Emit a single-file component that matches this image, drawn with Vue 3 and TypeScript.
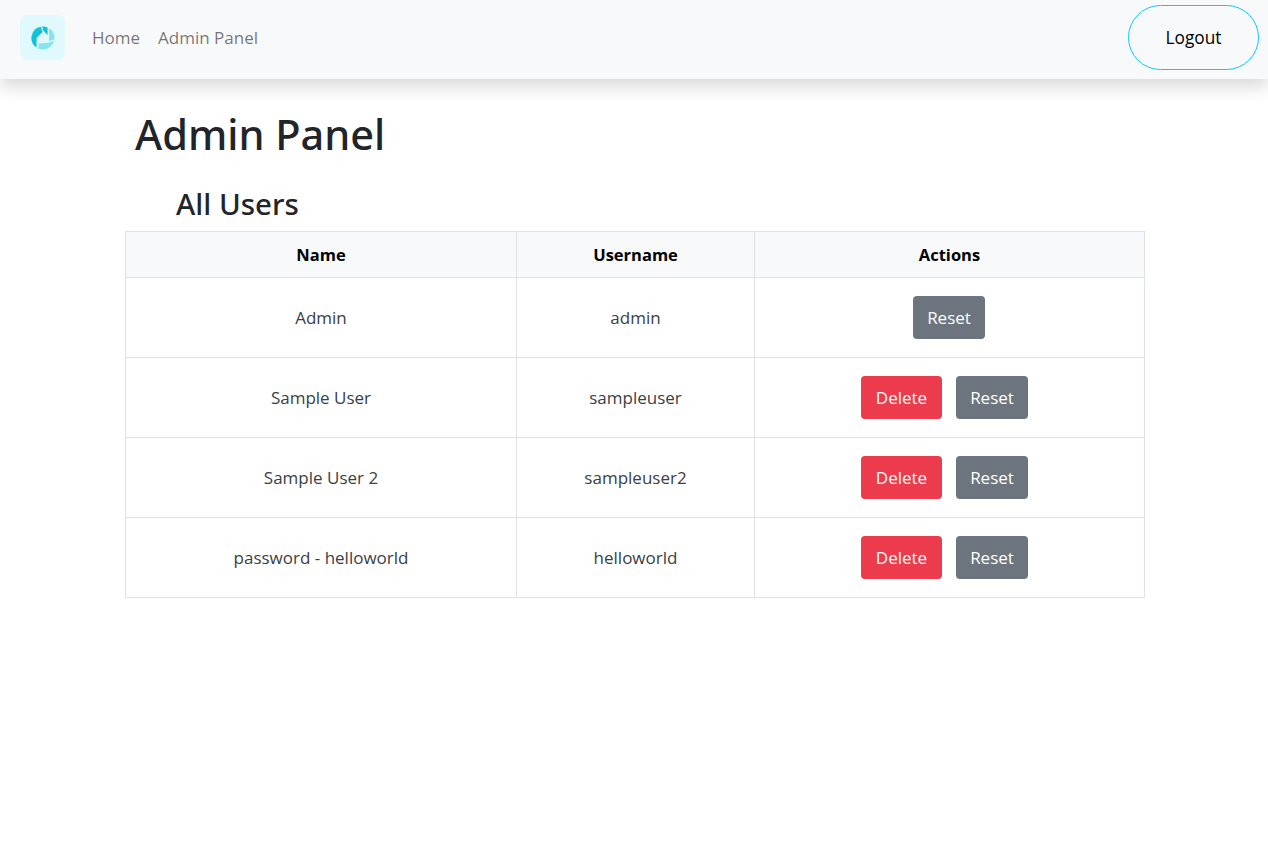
<template>
  <div class="page">
    <nav class="navbar">
      <div class="nav-left">
        <div class="logo">
          <svg width="24" height="24" viewBox="0 0 24 24">
            <path d="M9.8 .7A11.5 11.5 0 0 0 5.6 21.6L5.6 12L11.6 6Z" fill="#12c2da" />
            <path d="M11 .5A11.5 11.5 0 0 1 16.6 1.4L16.6 9L12.4 4.8Z" fill="#12c2da" />
            <path d="M18 2.2A11.5 11.5 0 0 1 23.4 13.4L18 15Z" fill="#86e4f0" />
            <path d="M23 15A11.5 11.5 0 0 1 7.2 22.5L8 17.4L17 16.8Z" fill="#86e4f0" />
          </svg>
        </div>
        <a class="nav-link">Home</a>
        <a class="nav-link">Admin Panel</a>
      </div>
      <button class="logout">Logout</button>
    </nav>

    <main class="content">
      <h1 class="title">Admin Panel</h1>
      <h2 class="subtitle">All Users</h2>
      <table class="users">
        <colgroup>
          <col class="col-name" />
          <col class="col-username" />
          <col class="col-actions" />
        </colgroup>
        <thead>
          <tr>
            <th>Name</th>
            <th>Username</th>
            <th>Actions</th>
          </tr>
        </thead>
        <tbody>
          <tr v-for="user in users" :key="user.username">
            <td>{{ user.name }}</td>
            <td>{{ user.username }}</td>
            <td>
              <div class="actions">
                <button v-if="user.canDelete" class="btn btn-danger">Delete</button>
                <button class="btn btn-secondary">Reset</button>
              </div>
            </td>
          </tr>
        </tbody>
      </table>
    </main>
  </div>
</template>

<script setup lang="ts">
interface User {
  name: string
  username: string
  canDelete: boolean
}

const users: User[] = [
  { name: 'Admin', username: 'admin', canDelete: false },
  { name: 'Sample User', username: 'sampleuser', canDelete: true },
  { name: 'Sample User 2', username: 'sampleuser2', canDelete: true },
  { name: 'password - helloworld', username: 'helloworld', canDelete: true },
]
</script>

<style>
body {
  background: #fff;
}
</style>

<style scoped>
.page {
  font-family: "Open Sans", "Noto Sans", sans-serif;
  color: #212529;
  min-height: 854px;
}

.navbar {
  display: flex;
  justify-content: space-between;
  align-items: center;
  height: 79px;
  padding: 0 9px 4px 20px;
  box-sizing: border-box;
  background-color: #f8f9fa;
  box-shadow: 0 8px 16px rgba(0, 0, 0, 0.15);
}

.nav-left {
  display: flex;
  align-items: center;
}

.logo {
  display: flex;
  align-items: center;
  justify-content: center;
  width: 45px;
  height: 45px;
  margin-right: 27px;
  border-radius: 8px;
  background-color: #dff9fc;
}

.nav-link {
  margin-right: 18px;
  font-size: 17px;
  color: rgba(0, 0, 0, 0.55);
}

.logout {
  width: 131px;
  height: 65px;
  border: 1px solid #0dcaf0;
  border-radius: 33px;
  background: transparent;
  font-family: inherit;
  font-size: 17.3px;
  color: #000;
}

.content {
  width: 1020px;
  margin: 0 auto;
}

.title,
.subtitle {
  font-family: "Noto Sans", "Open Sans", sans-serif;
  font-weight: 500;
}

.title {
  margin: 0;
  padding: 27px 0 0 11px;
  font-size: 41.5px;
  line-height: 56px;
}

.subtitle {
  margin: 0;
  padding: 22px 0 0 52px;
  font-size: 29.5px;
  line-height: 39px;
}

.users {
  width: 1019px;
  margin: 8px 0 0 1px;
  border-collapse: collapse;
  table-layout: fixed;
  font-size: 17px;
  text-align: center;
}

.col-name {
  width: 391px;
}

.col-username {
  width: 238px;
}

.col-actions {
  width: 390px;
}

.users th,
.users td {
  border: 1px solid #dee2e6;
  vertical-align: middle;
  padding: 0;
}

.users th {
  height: 45px;
  background-color: #f8f9fa;
  color: #000;
  font-size: 16.5px;
  font-weight: 700;
}

.users td {
  height: 79px;
  color: #3b4046;
}

.actions {
  display: flex;
  justify-content: center;
  gap: 14px;
  padding-right: 1px;
}

.btn {
  width: 72px;
  height: 43px;
  padding: 0;
  border: 0;
  border-radius: 4px;
  font-family: inherit;
  font-size: 17px;
  color: #fff;
}

.btn-danger {
  width: 81px;
  background-color: #eb3b4d;
}

.btn-secondary {
  background-color: #6c757d;
}

/* the reset button keeps a trailing gap when it follows delete */
.btn-danger + .btn-secondary {
  margin-right: 9px;
}
</style>
